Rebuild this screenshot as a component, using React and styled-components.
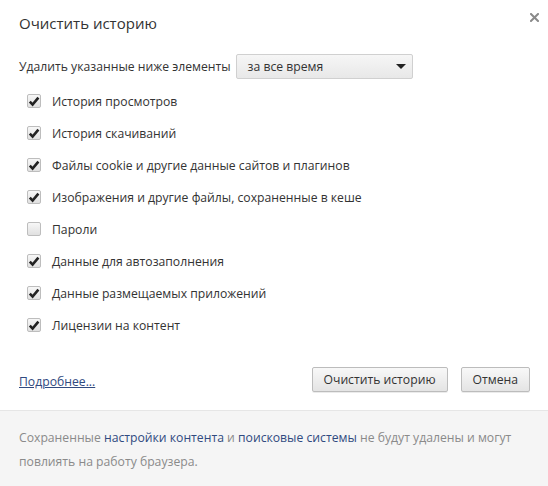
import React, { useState } from "react";
import styled, { createGlobalStyle } from "styled-components";

const GlobalStyle = createGlobalStyle`
  html, body {
    margin: 0;
    padding: 0;
    background: #ffffff;
  }
  body {
    font-family: "Open Sans", "Liberation Sans", sans-serif;
    font-size: 12.2px;
    color: #333333;
  }
`;

const items = [
  { label: "История просмотров", checked: true },
  { label: "История скачиваний", checked: true },
  { label: "Файлы cookie и другие данные сайтов и плагинов", checked: true },
  { label: "Изображения и другие файлы, сохраненные в кеше", checked: true },
  { label: "Пароли", checked: false },
  { label: "Данные для автозаполнения", checked: true },
  { label: "Данные размещаемых приложений", checked: true },
  { label: "Лицензии на контент", checked: true },
];

export default function App() {
  const [checks, setChecks] = useState(items.map((i) => i.checked));

  const toggle = (idx) =>
    setChecks((prev) => prev.map((v, i) => (i === idx ? !v : v)));

  return (
    <>
      <GlobalStyle />
      <Dialog>
        <Header>
          <Title>Очистить историю</Title>
          <Close aria-label="Закрыть">
            <svg width="9" height="9" viewBox="0 0 9 9">
              <path
                d="M1 1 L8 8 M8 1 L1 8"
                stroke="#8a8a8a"
                strokeWidth="2"
                strokeLinecap="square"
              />
            </svg>
          </Close>
        </Header>

        <Body>
          <PeriodRow>
            <span>Удалить указанные ниже элементы</span>
            <Select>
              <span>за все время</span>
              <svg width="10" height="5" viewBox="0 0 10 5">
                <path d="M0 0 L10 0 L5 5 Z" fill="#222" />
              </svg>
            </Select>
          </PeriodRow>

          <List>
            {items.map((item, idx) => (
              <Row key={item.label} onClick={() => toggle(idx)}>
                <Box>
                  {checks[idx] && (
                    <svg width="12" height="11" viewBox="0 0 12 11">
                      <path
                        d="M1.8 5.6 L4.6 8.6 L10.4 1.6"
                        stroke="#222"
                        strokeWidth="2.6"
                        fill="none"
                      />
                    </svg>
                  )}
                </Box>
                <span>{item.label}</span>
              </Row>
            ))}
          </List>

          <Actions>
            <MoreLink href="#">Подробнее...</MoreLink>
            <Buttons>
              <Button>Очистить историю</Button>
              <Button>Отмена</Button>
            </Buttons>
          </Actions>
        </Body>

        <Footer>
          <p>
            Сохраненные <FooterLink href="#">настройки контента</FooterLink> и{" "}
            <FooterLink href="#">поисковые системы</FooterLink> не будут
            удалены и могут повлиять на работу браузера.
          </p>
        </Footer>
      </Dialog>
    </>
  );
}

const Dialog = styled.div`
  width: 548px;
  height: 486px;
  display: flex;
  flex-direction: column;
  background: #fff;
  overflow: hidden;
`;

const Header = styled.div`
  display: flex;
  justify-content: space-between;
  align-items: flex-start;
  padding: 12px 9px 0 19px;
  height: 42px;
  box-sizing: border-box;
`;

const Title = styled.div`
  font-size: 15px;
  line-height: 22px;
  color: #333;
`;

const Close = styled.div`
  width: 9px;
  height: 9px;
  margin-top: 1px;
  line-height: 0;
`;

const Body = styled.div`
  flex: 1;
  padding: 0 18px 0 19px;
  display: flex;
  flex-direction: column;
`;

const PeriodRow = styled.div`
  display: flex;
  align-items: center;
  gap: 5px;
  margin-top: 12px;
  height: 25px;
`;

const Select = styled.div`
  width: 177px;
  height: 25px;
  box-sizing: border-box;
  display: flex;
  align-items: center;
  justify-content: space-between;
  padding: 0 6px 0 11px;
  border: 1px solid #d0d0d0;
  border-radius: 2px;
  background: linear-gradient(#f6f6f6, #e8e8e8);
  color: #333;
`;

const List = styled.div`
  margin-top: 6px;
  display: flex;
  flex-direction: column;
`;

const Row = styled.label`
  display: flex;
  align-items: center;
  gap: 11px;
  height: 32px;
  padding-left: 8px;
  cursor: default;
`;

const Box = styled.span`
  width: 14px;
  height: 14px;
  box-sizing: border-box;
  border: 1px solid #bdbdbd;
  border-radius: 2px;
  background: linear-gradient(#f7f7f7, #e0e0e0);
  display: flex;
  align-items: center;
  justify-content: center;
`;

const Actions = styled.div`
  margin-top: 26px;
  display: flex;
  align-items: center;
  justify-content: space-between;
`;

const MoreLink = styled.a`
  color: #304a80;
  text-decoration: underline;
  margin-top: 4px;
`;

const Buttons = styled.div`
  display: flex;
  gap: 13px;
`;

const Button = styled.button`
  font-family: inherit;
  font-size: 12.2px;
  color: #333;
  height: 25px;
  padding: 0 11px;
  border: 1px solid #bcbcbc;
  border-radius: 2px;
  background: linear-gradient(#f8f8f8, #e4e4e4);
  box-shadow: 0 1px 0 rgba(0, 0, 0, 0.08);
`;

const Footer = styled.div`
  height: 76px;
  box-sizing: border-box;
  border-top: 1px solid #e6e6e6;
  background: #f5f5f5;
  padding: 15px 20px 0 19px;
  color: #8a8a8a;

  p {
    margin: 0;
    line-height: 24px;
  }
`;

const FooterLink = styled.a`
  color: #304a80;
  text-decoration: none;
`;
